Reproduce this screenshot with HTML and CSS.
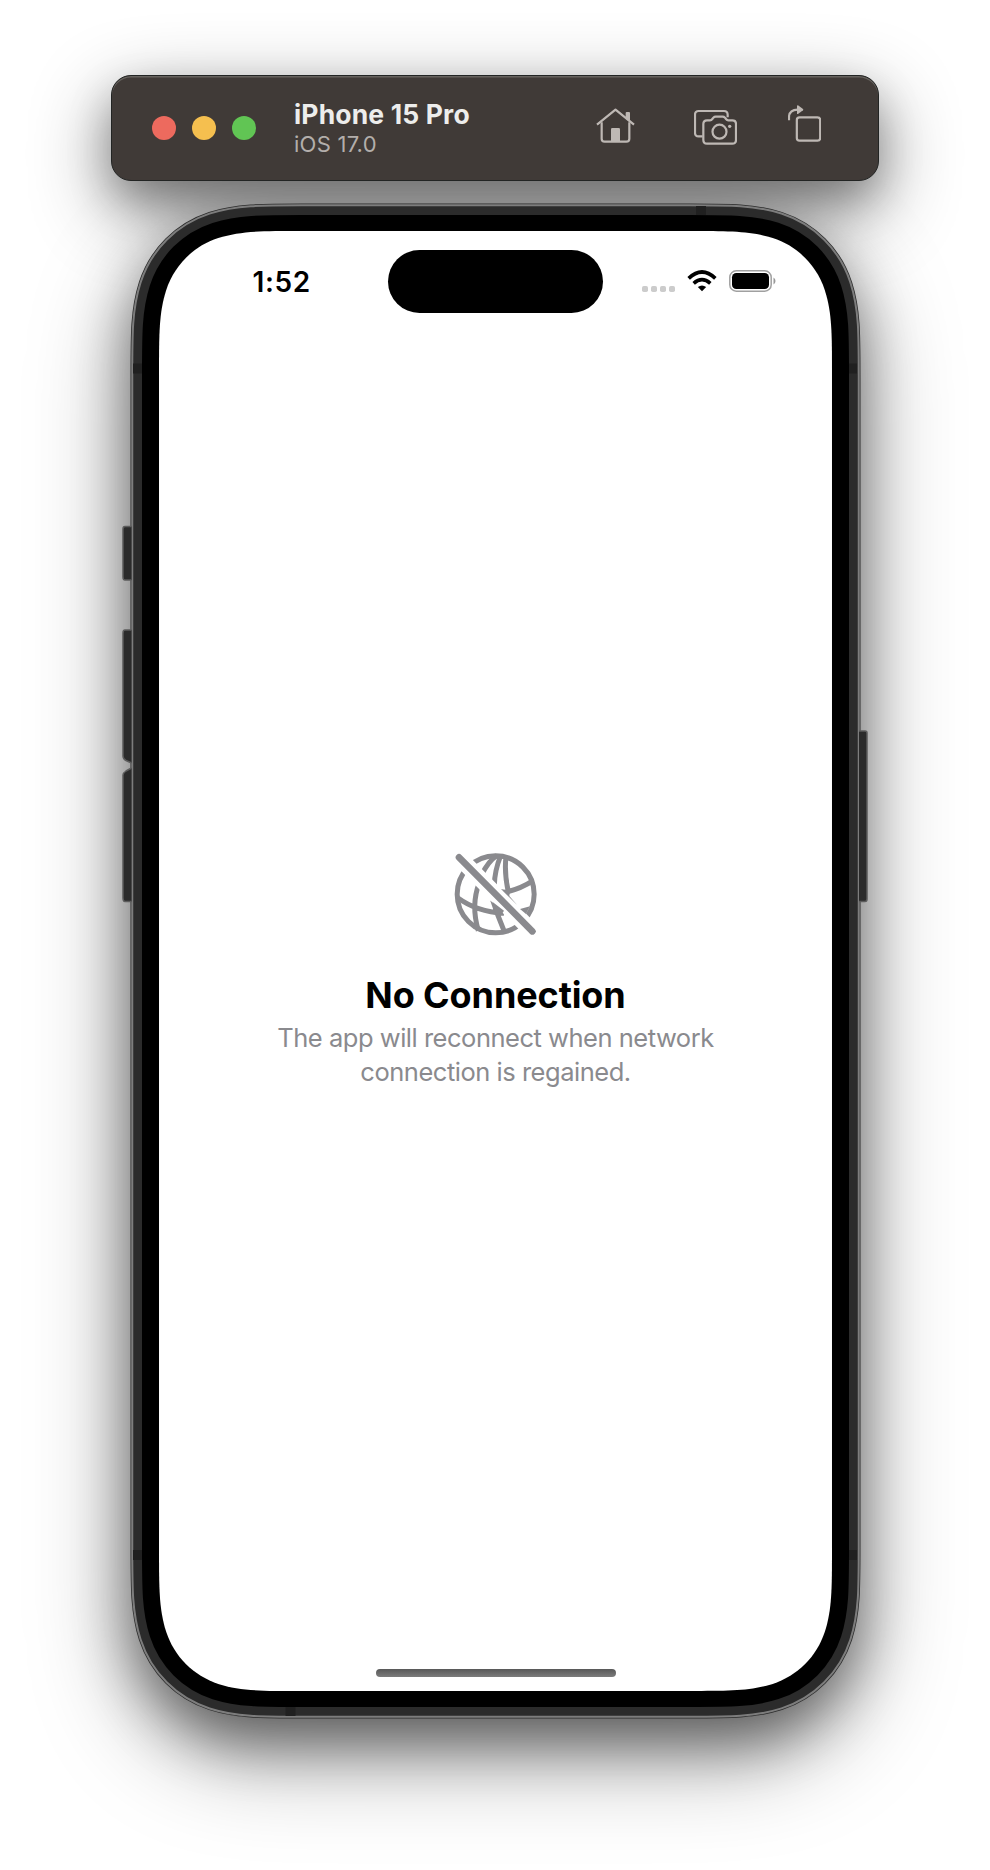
FILE: index.html
```html
<!DOCTYPE html>
<html lang="en">
<head>
<meta charset="utf-8">
<title>iPhone 15 Pro</title>
<link rel="stylesheet" href="styles.css">
</head>
<body>
<header class="toolbar">
  <div class="lights"><i class="light red"></i><i class="light yellow"></i><i class="light green"></i></div>
  <div class="titles">
    <h1 class="device-name">iPhone 15 Pro</h1>
    <p class="os">iOS 17.0</p>
  </div>
  <nav class="actions">
    <svg class="act" width="39" height="36" viewBox="0 0 117 108">
      <path d="M3 50 L58.500 5 L114 50" stroke-linejoin="round"/>
      <path d="M17 43 V92 Q17 101 26 101 H91 Q100 101 100 92 V43"/>
      <path class="solid" d="M45 64 Q45 60 49 60 H68 Q72 60 72 64 V101 H45 Z"/>
      <path class="solid" d="M89 15 Q89 12 92 12 H99 Q102 12 102 15 V42 L89 32 Z"/>
    </svg>
    <svg class="act camera" width="43" height="36" viewBox="0 0 129 108">
      <path d="M26 82 H14 Q3 82 3 71 V17 Q3 6 14 6 H90 Q101 6 101 17 V25"/>
      <path d="M39 34 H48 Q52 34 55 30 L58 26 Q61 23 65 23 H86 Q90 23 93 26 L96 30 Q99 34 103 34 H115 Q126 34 126 45 V93 Q126 104 115 104 H39 Q28 104 28 93 V45 Q28 34 39 34 Z"/>
      <circle cx="76.500" cy="68" r="21"/>
      <circle class="solid" cx="107" cy="52" r="5"/>
    </svg>
    <svg class="act rotate" width="33" height="37" viewBox="0 0 99 111">
      <rect x="26.500" y="37" width="70" height="70" rx="8"/>
      <path d="M3 46 V37 Q3 15 29 14"/>
      <path class="solid" d="M27 2 Q27 0 30 1 L45 12 Q47 14 45 16 L30 27 Q27 28 27 26 Z"/>
    </svg>
  </nav>
</header>

<main class="device">
  <div class="shadow"></div>
  <svg class="chassis" width="990" height="1560" viewBox="0 181 990 1560">
    <defs>
      <path id="body" d="M158 374.700 c0-41.400 0-62.100 7.100-84.300 c8.100-25 27.300-44.200 52.300-52.300 c22.300-7.100 43-7.100 84.300-7.100 H689.300 c41.300 0 62 0 84.300 7.100 c25 8.100 44.200 27.300 52.300 52.300 c7.100 22.200 7.100 42.900 7.100 84.300 V1547.300 c0 41.400 0 62.100-7.100 84.300 c-8.100 25-27.300 44.200-52.300 52.300 c-22.300 7.100-43 7.100-84.300 7.100 H301.700 c-41.300 0-62 0-84.300-7.100 c-25-8.100-44.200-27.300-52.300-52.300 c-7.100-22.200-7.100-42.900-7.100-84.300 Z"/>
    </defs>
    <use href="#body" stroke="#2b2b2b" stroke-width="55"/>
    <use href="#body" stroke="#7d7d7d" stroke-width="53.500"/>
    <g class="keys">
      <path d="M131.500 526.500 H125 Q123 526.500 123 529 V577 Q123 580 125 580 H131.500"/>
      <path d="M131.500 630 H125 Q123 630 123 633 V756 Q123 759 126 760.500 L131.500 763"/>
      <path d="M131.500 768 L126 771 Q123 773 123 775 V898 Q123 901.500 125 901.500 H131.500"/>
      <path d="M859 731 H865 Q867 731 867 733 V899 Q867 901.500 865 901.500 H859"/>
    </g>
    <use href="#body" stroke="#2b2b2b" stroke-width="49.500"/>
    <g fill="#202020">
      <rect x="133" y="363.500" width="9" height="10"/><rect x="848" y="363.500" width="9" height="10"/>
      <rect x="133" y="1550" width="9" height="10"/><rect x="848" y="1550" width="9" height="10"/>
      <rect x="696" y="206" width="10" height="9"/><rect x="285.500" y="1707" width="10" height="9"/>
    </g>
    <use href="#body" stroke="#000" stroke-width="32"/>
    <use href="#body" class="glass" transform="translate(495.500 0) scale(.997 1) translate(-495.500 0)"/>
  </svg>
  <section class="screen">
    <div class="status">
      <time class="clock">1:52</time>
      <div class="island"></div>
      <div class="indicators">
        <svg class="cell" width="33" height="6" viewBox="0 0 33 6" fill="#ccc"><rect width="6" height="6" rx="1.800"/><rect x="9" width="6" height="6" rx="1.800"/><rect x="18" width="6" height="6" rx="1.800"/><rect x="27" width="6" height="6" rx="1.800"/></svg>
        <svg class="wifi" width="30" height="22" viewBox="0 0 90 66" fill="none" stroke="#000" stroke-width="11">
          <path d="M5 25 Q45 -13 85 25"/><path d="M20 40 Q45 18 70 40"/><path d="M32.500 51 Q45 42 57.500 51 L45 64 Z" fill="#000" stroke="none"/>
        </svg>
        <svg class="battery" width="47" height="22" viewBox="0 0 47 22"><rect x=".8" y=".8" width="41.400" height="20.400" rx="6.500" fill="none" stroke="#a0a0a0" stroke-width="1.500"/><rect x="3" y="3" width="37" height="16" rx="4.300"/><path d="M44.500 7.500 Q46.500 8.500 46.500 11 Q46.500 13.500 44.500 14.500 Z" fill="#999"/></svg>
      </div>
    </div>
    <div class="empty">
      <svg class="globe" width="130" height="130" viewBox="0 0 390 390">
        <g class="grid">
          <circle cx="197" cy="193" r="115.500"/>
          <path d="M200 77 Q176 93 155 134 M212 77 Q194 122 193 165 M228 80 Q222 130 236 190 M309 152 Q270 178 220 188"/>
          <path d="M84 204 Q140 245 222 250 M148 158 Q122 225 145 302 M188 210 Q202 255 222 302"/>
        </g>
        <path d="M87 82 L307 304" stroke="#fff" stroke-width="48" stroke-linecap="round"/>
        <path d="M213 177 L240 182 L238 198 L262 226 Z M270 237 L300 229 L288 252 Z M187 215 L222 242 L212 257 L196 252 Z" fill="#8a8a8e"/>
        <path d="M87 82 L307 304" stroke="#8a8a8e" stroke-width="20" stroke-linecap="round"/>
      </svg>
      <h2 class="headline">No Connection</h2>
      <p class="detail">The app will reconnect when network<br>connection is regained.</p>
    </div>
    <div class="home-bar"></div>
  </section>
</main>
</body>
</html>
```
FILE: styles.css
```css
* { box-sizing: border-box; margin: 0; padding: 0; }
body { width: 990px; height: 1870px; background: #fff; font-family: Inter, sans-serif; overflow: hidden; display: flex; flex-direction: column; align-items: center; padding-top: 75px; }
.toolbar { position: relative; z-index: 1; flex: none; width: 768px; height: 106px; border-radius: 20px; background: #403a37; border: 1px solid #222423; box-shadow: inset 0 1.500px 0 #66625e; display: flex; align-items: center; padding: 0 57px 0 40px; }
.lights { display: flex; gap: 16px; }
.light { width: 24px; height: 24px; border-radius: 50%; }
.red { background: #ed6a5e; }
.yellow { background: #f5bf4f; }
.green { background: #61c554; }
.titles { margin-left: 38px; }
.device-name { font-size: 26.500px; line-height: 30px; font-weight: 700; color: #ededec; letter-spacing: .15px; white-space: nowrap; }
.os { font-size: 22px; line-height: 28px; color: #b3aeab; letter-spacing: .25px; padding-top: 1px; }
.actions { margin-left: auto; display: flex; align-items: center; }
.act { fill: none; stroke: #beb8b4; stroke-width: 6.600; margin-top: -5px; }
.act .solid { fill: #beb8b4; stroke: none; }
.camera { margin-left: 59px; margin-top: -3px; }
.rotate { margin-left: 51px; margin-top: -9px; }
.device { position: relative; width: 990px; height: 1560px; flex: none; display: flex; justify-content: center; padding-top: 50px; }
.shadow { position: absolute; left: 132px; top: 24px; width: 726px; height: 1512px; border-radius: 122px; box-shadow: 0 36px 100px rgba(0,0,0,.4), 0 24px 56px rgba(0,0,0,.45); }
/* Toolbar shadow falling on the gap above the handset */
.shadow::before { content: ""; position: absolute; left: -19px; top: -128px; width: 764px; height: 102px; border-radius: 20px; box-shadow: 0 26px 80px 2px rgba(0,0,0,.46), 0 20px 44px rgba(0,0,0,.28); }
.chassis { position: absolute; left: 0; top: 0; fill: none; }
.keys { fill: #2b2b2b; stroke: #5c5c5c; stroke-width: 1.500; }
.glass { fill: #fff; }
.screen { position: relative; width: 673px; height: 1460px; display: flex; flex-direction: column; align-items: center; }
.status { width: 100%; height: 82px; padding-top: 19px; display: grid; grid-template-columns: 229px 215px 1fr; align-items: center; }
.clock { font-size: 28px; font-weight: 600; line-height: 34px; padding-left: 94px; letter-spacing: .6px; }
.island { height: 63px; border-radius: 32px; background: #000; }
.indicators { display: flex; align-items: center; padding-left: 39px; margin-top: -1px; }
.cell { margin-top: 15px; }
.wifi { margin-left: 12px; }
.battery { margin-left: 12px; }
.empty { flex: 1; width: 100%; padding-top: 517px; display: flex; flex-direction: column; align-items: center; }
.globe { fill: none; margin-right: 1px; }
.grid { stroke: #8a8a8e; stroke-width: 15; }
.headline { margin: 13px 0 0 1px; font-size: 36px; line-height: 44px; font-weight: 700; color: #000; letter-spacing: -.1px; }
.detail { font-size: 25.500px; line-height: 34px; color: #8a8a8e; text-align: center; letter-spacing: -.48px; margin: 4px 0 0 1px; }
.home-bar { width: 240px; height: 8px; margin: 0 0 14px 1px; border-radius: 4px; background: linear-gradient(#585858, #7c7c7c); }
```
